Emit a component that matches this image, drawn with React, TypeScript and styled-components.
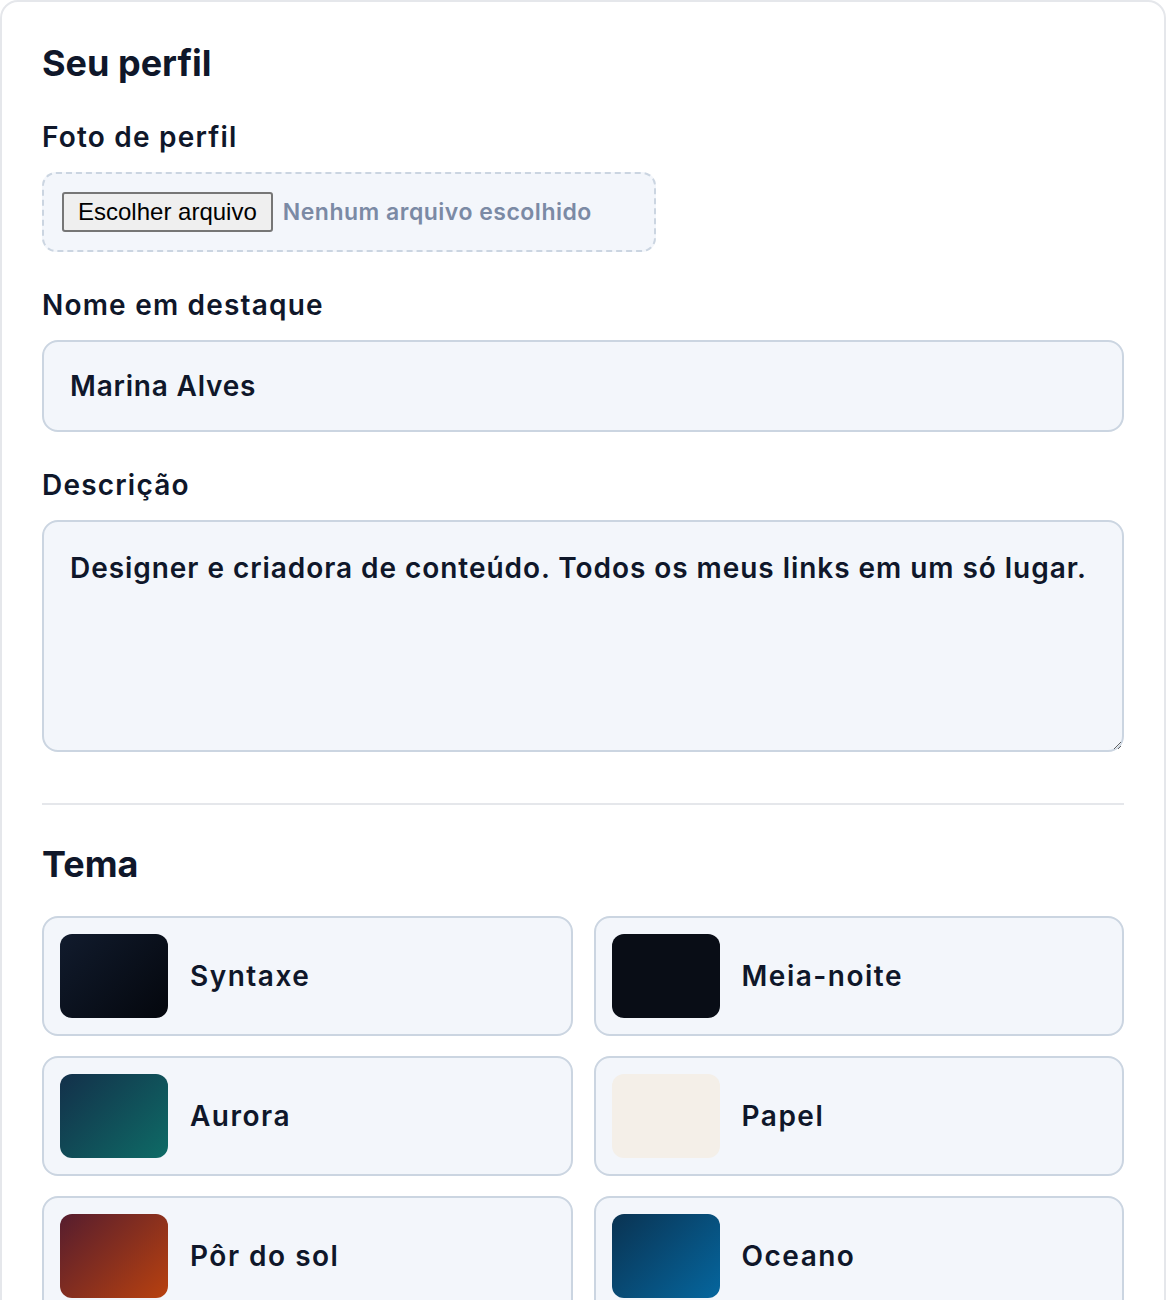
import React from "react";
import styled, { createGlobalStyle } from "styled-components";

const Global = createGlobalStyle`
  html, body { margin: 0; padding: 0; background: #ffffff; }
  body { font-family: Inter, "Noto Sans", sans-serif; color: #0f172a; }
  * { box-sizing: border-box; }
`;

const Card = styled.section`
  border: 2px solid #e5e7eb;
  border-radius: 18px;
  padding: 40px 40px 42px;
  background: #ffffff;
  display: flex;
  flex-direction: column;
`;

const Title = styled.h2<{ $gap: number }>`
  margin: 0 0 ${(p) => p.$gap}px;
  font-size: 36px;
  line-height: 42px;
  font-weight: 700;
  letter-spacing: 0;
  color: #0f172a;
`;

const Field = styled.div`
  display: flex;
  flex-direction: column;
  gap: 18px;
  margin-bottom: 36px;
`;

const Label = styled.label`
  font-size: 28px;
  line-height: 34px;
  font-weight: 600;
  color: #0f172a;
  letter-spacing: 1.2px;
`;

const FileBox = styled.div`
  width: 614px;
  display: flex;
  align-items: center;
  gap: 10px;
  padding: 18px;
  border: 2px dashed #cbd5e1;
  border-radius: 14px;
  background: #f3f6fb;
`;

const FileButton = styled.button`
  font-family: "Liberation Sans", Arial, sans-serif;
  font-size: 24px;
  color: #000000;
  background: #efefef;
  border: 2px solid #767676;
  border-radius: 3px;
  height: 40px;
  padding: 0 14px;
  line-height: 1;
  flex: none;
`;

const FileName = styled.span`
  font-size: 23px;
  font-weight: 600;
  color: #7b8aa5;
  letter-spacing: 0.5px;
`;

const HiddenInput = styled.input`
  display: none;
`;

const TextInput = styled.input`
  width: 100%;
  height: 92px;
  padding: 0 26px;
  border: 2px solid #cbd5e1;
  border-radius: 16px;
  background: #f3f6fb;
  font-family: Inter, "Noto Sans", sans-serif;
  font-size: 28px;
  font-weight: 600;
  color: #0f172a;
  letter-spacing: 0.8px;
  outline: none;
`;

const TextArea = styled.textarea`
  width: 100%;
  height: 232px;
  padding: 26px;
  border: 2px solid #cbd5e1;
  border-radius: 16px;
  background: #f3f6fb;
  font-family: Inter, "Noto Sans", sans-serif;
  font-size: 28px;
  line-height: 40px;
  font-weight: 600;
  color: #0f172a;
  letter-spacing: 0.95px;
  resize: vertical;
  outline: none;
  display: block;
`;

const Divider = styled.hr`
  border: none;
  height: 2px;
  background: #e5e7eb;
  margin: 15px 0 38px;
`;

const Grid = styled.div`
  display: grid;
  grid-template-columns: 1fr 1fr;
  column-gap: 21px;
  row-gap: 20px;
`;

const ThemeCard = styled.button`
  display: flex;
  align-items: center;
  gap: 22px;
  padding: 16px;
  border: 2px solid #cbd5e1;
  border-radius: 16px;
  background: #f3f6fb;
  font-family: Inter, "Noto Sans", sans-serif;
  text-align: left;
  cursor: pointer;
`;

const Swatch = styled.span<{ $bg: string }>`
  width: 108px;
  height: 84px;
  flex: none;
  border-radius: 12px;
  background: ${(p) => p.$bg};
`;

const ThemeName = styled.span`
  font-size: 28px;
  font-weight: 600;
  color: #0f172a;
  letter-spacing: 1.5px;
`;

const themes = [
  { name: "Syntaxe", bg: "linear-gradient(135deg, #111b2d 0%, #04070d 100%)" },
  { name: "Meia-noite", bg: "#090d16" },
  { name: "Aurora", bg: "linear-gradient(135deg, #13304a 0%, #0e6b66 100%)" },
  { name: "Papel", bg: "#f4efe8" },
  { name: "Pôr do sol", bg: "linear-gradient(135deg, #561d2e 0%, #b8410f 100%)" },
  { name: "Oceano", bg: "linear-gradient(135deg, #0a3352 0%, #05669e 100%)" },
];

export default function App() {
  return (
    <>
      <Global />
      <Card>
        <Title $gap={36}>Seu perfil</Title>
        <Field>
          <Label>Foto de perfil</Label>
          <FileBox>
            <FileButton type="button">Escolher arquivo</FileButton>
            <FileName>Nenhum arquivo escolhido</FileName>
            <HiddenInput type="file" />
          </FileBox>
        </Field>
        <Field>
          <Label>Nome em destaque</Label>
          <TextInput defaultValue="Marina Alves" />
        </Field>
        <Field>
          <Label>Descrição</Label>
          <TextArea defaultValue="Designer e criadora de conteúdo. Todos os meus links em um só lugar." />
        </Field>
        <Divider />
        <Title $gap={31}>Tema</Title>
        <Grid>
          {themes.map((t) => (
            <ThemeCard key={t.name} type="button">
              <Swatch $bg={t.bg} />
              <ThemeName>{t.name}</ThemeName>
            </ThemeCard>
          ))}
        </Grid>
      </Card>
    </>
  );
}
